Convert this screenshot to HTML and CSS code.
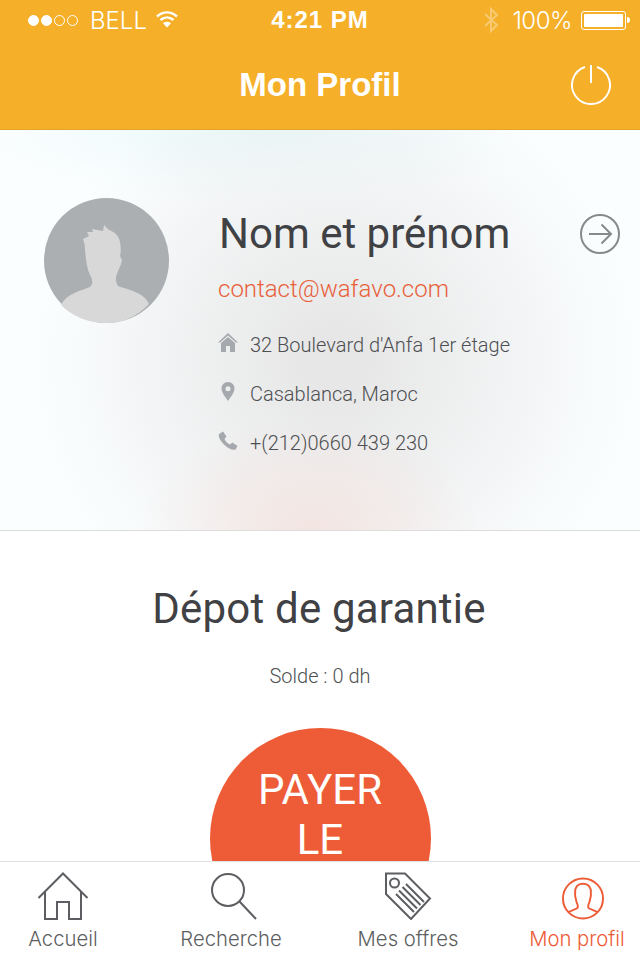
FILE: index.html
```html
<!DOCTYPE html>
<html>
    <head>
        <title>Mon Profil</title>
        <link rel="stylesheet" href="styles.css">
    </head>
    <body>
        <div id="app">
            <header class="top">
                <div class="status">
                    <div class="status-left">
                        <span class="dots"><i class="on"></i><i class="on"></i><i></i><i></i></span>
                        <span class="carrier">BELL</span>
                        <svg class="wifi" width="24" height="18" viewBox="0 0 24 18">
                            <path d="M2 6.5C8 1 16 1 22 6.5" />
                            <path d="M5.5 10C9.5 6.5 14.5 6.5 18.5 10" />
                            <path d="M12 17.5L8 13.2C10.4 11.4 13.6 11.4 16 13.2Z" class="solid" />
                        </svg>
                    </div>
                    <span class="clock">4:21 PM</span>
                    <div class="status-right">
                        <svg class="bluetooth" width="16" height="26" viewBox="0 0 16 26">
                            <path d="M2 7L14 18L8 24V2L14 8L2 19" />
                        </svg>
                        <span class="battery-text">100%</span>
                        <span class="battery"><b></b></span>
                        <span class="battery-tip"></span>
                    </div>
                </div>
                <div class="nav">
                    <h1>Mon Profil</h1>
                    <svg class="power" width="40" height="40" viewBox="0 0 40 40">
                        <path d="M14 2A19 19 0 1 0 26 2" />
                        <path d="M20 0V18" />
                    </svg>
                </div>
            </header>

            <main class="content">
                <section class="profile">
                    <svg class="avatar" width="125" height="125" viewBox="0 0 125 125">
                        <circle cx="62.5" cy="62.5" r="62.5" fill="#abafb2" />
                        <path fill="#d8d8d8" d="M17 107C22 96 36 93 46 89C49 86 49 82 46 77C43 71 42 62 41 52C41 47 40 44 39 41L45 38L43 34L49 34L48 31L59 33L60 27L65 32C71 34 75 38 76 44C77 50 77 54 76 58L78 62C77 68 75 70 73 76C71 80 72 85 74 88C84 92 100 94 105 106C94 118 79 125 62.5 125C44 125 28 118 17 107Z" />
                    </svg>
                    <div class="details">
                        <div class="name-row">
                            <h2>Nom et prénom</h2>
                            <svg class="go" width="42" height="42" viewBox="0 0 42 42">
                                <circle cx="21" cy="21" r="19" />
                                <path d="M10 21H31M22.5 11.5L32 21L22.5 30.5" />
                            </svg>
                        </div>
                        <a class="email">contact@wafavo.com</a>
                        <ul class="info">
                            <li>
                                <svg width="20" height="20" viewBox="0 0 20 20">
                                    <path d="M10 0L20 9.5H18L10 2.5L2 9.5H0Z M10 4L17 10V19H12V13H8V19H3V10Z" />
                                </svg>
                                32 Boulevard d'Anfa 1er étage
                            </li>
                            <li>
                                <svg width="20" height="20" viewBox="0 0 20 20">
                                    <path fill-rule="evenodd" d="M10 0C14 0 16.5 3 16.5 6.5C16.5 10.5 12 16 10 19C8 16 3.500 10.500 3.500 6.500C3.500 3 6 0 10 0ZM10 4.300A2.500 2.500 0 1 0 10 9.300A2.500 2.500 0 1 0 10 4.300Z" />
                                </svg>
                                Casablanca, Maroc
                            </li>
                            <li>
                                <svg width="20" height="20" viewBox="0 0 20 20">
                                    <path d="M1 3L5 0.500L8.500 5.500L6.500 8C7.500 10.500 9.500 12.500 12 13.500L14.500 11.500L19.500 15L17.500 18.500C15 19.500 10.500 18 6.500 14C2.500 10 0 6 1 3Z" />
                                </svg>
                                +(212)0660 439 230
                            </li>
                        </ul>
                    </div>
                </section>

                <section class="deposit">
                    <h2>Dépot de garantie</h2>
                    <p>Solde : 0 dh</p>
                    <button class="pay"><span>PAYER</span><span>LE</span></button>
                </section>
            </main>

            <nav class="tabs">
                <a class="tab">
                    <svg width="52" height="48" viewBox="0 0 52 48">
                        <path d="M1.500 26L26 1.500L50.500 26M8 20V47H20V30H32V47H44V20" />
                    </svg>
                    Accueil
                </a>
                <a class="tab">
                    <svg class="search-icon" width="50" height="47" viewBox="0 0 50 47">
                        <circle cx="19" cy="17" r="16" />
                        <path d="M30.500 28.500L47 46" />
                    </svg>
                    Recherche
                </a>
                <a class="tab">
                    <svg width="48" height="48" viewBox="0 0 48 48">
                        <path d="M2 1.500H21L46 26.500L27 47L2 22Z" />
                        <circle cx="10.500" cy="11" r="4.500" />
                        <path d="M12 22L30 40M15 18.500L33 36.500M18.500 15L36.500 33M22 12L40 30" />
                    </svg>
                    Mes offres
                </a>
                <a class="tab active">
                    <svg class="profile-icon" width="44" height="43" viewBox="0 0 44 44">
                        <circle cx="22" cy="22" r="20.500" />
                        <path d="M7 36L16 32C17 31 17 29 15.500 26C14 22 13.500 17 14 13C15 9 18 7 22 7C26 7 29 9 30 13C30.500 17 30 22 28.500 26C27 29 27 31 28 32L37 36" />
                    </svg>
                    Mon profil
                </a>
            </nav>
        </div>
    </body>
</html>
```

FILE: styles.css
```css
html, body {
    margin: 0;
    padding: 0;
}

body {
    width: 640px;
    height: 960px;
    overflow: hidden;
    background: #fff;
    font-family: Roboto, sans-serif;
    color: #3f4144;
}

h1, h2, p, ul {
    margin: 0;
    padding: 0;
}

#app {
    display: flex;
    flex-direction: column;
    height: 960px;
}

/* Orange header */

.top {
    flex: none;
    height: 129px;
    background: #f5af29;
    border-bottom: 1px solid #e5a228;
    color: #fff;
    font-family: "Liberation Sans", sans-serif;
}

.status {
    display: grid;
    grid-template-columns: 1fr auto 1fr;
    align-items: center;
    height: 40px;
    padding: 0 10px 0 10px;
    font-size: 25px;
}

.status-left, .status-right {
    display: flex;
    align-items: center;
}

.status-left {
    padding-left: 18px;
}

.status-right {
    justify-content: flex-end;
}

.dots {
    display: flex;
    gap: 2px;
    margin-right: 12px;
}

.dots i {
    box-sizing: border-box;
    width: 11px;
    height: 11px;
    border: 1px solid #fff;
    border-radius: 50%;
}

.dots i.on {
    background: #fff;
}

.carrier {
    font-family: Inter, sans-serif;
    font-weight: 300;
    font-size: 24px;
}

.wifi {
    margin-left: 8px;
    margin-bottom: 2px;
    fill: none;
    stroke: #fff;
    stroke-width: 2.4;
}

.wifi .solid {
    fill: #fff;
    stroke: none;
}

.clock {
    font-size: 24px;
    font-weight: bold;
    letter-spacing: 1px;
}

.bluetooth {
    margin-right: 13px;
    fill: none;
    stroke: rgba(255, 255, 255, .35);
    stroke-width: 2;
}

.battery-text {
    font-family: Inter, sans-serif;
    font-weight: 300;
    font-size: 24px;
    margin-right: 9px;
    letter-spacing: -.5px;
}

.battery {
    box-sizing: border-box;
    display: block;
    width: 45px;
    height: 19px;
    padding: 2px;
    border: 1px solid #fff;
    border-radius: 3px;
}

.battery b {
    display: block;
    height: 100%;
    background: #fff;
    border-radius: 1px;
}

.battery-tip {
    width: 3px;
    height: 6px;
    background: #fff;
    border-radius: 0 3px 3px 0;
    margin-left: 1px;
}

.nav {
    position: relative;
    display: flex;
    justify-content: center;
    align-items: center;
    height: 89px;
}

.nav h1 {
    font-size: 33px;
    font-weight: bold;
}

.power {
    position: absolute;
    top: 25px;
    right: 29px;
    fill: none;
    stroke: #fff;
    stroke-width: 2;
}

/* Scrolling part, the tab bar cuts it off */

.content {
    flex: 1;
    min-height: 0;
    overflow: hidden;
}

.profile {
    box-sizing: border-box;
    display: flex;
    height: 401px;
    padding: 68px 19px 0 44px;
    border-bottom: 1px solid #dcdcdc;
    background:
        radial-gradient(ellipse 170px 110px at 310px 400px, rgba(243, 226, 222, .85), rgba(243, 226, 222, 0)),
        radial-gradient(ellipse 300px 290px at 335px 230px, #e7e7e7 10%, rgba(231, 231, 231, 0)),
        radial-gradient(ellipse 280px 70px at 260px 0, #eaf8f9, rgba(234, 248, 249, 0)),
        #fbfeff;
}

.avatar {
    flex: none;
}

.details {
    flex: 1;
    margin-left: 49px;
}

.name-row {
    display: flex;
    justify-content: space-between;
    align-items: center;
    height: 70px;
}

.name-row h2 {
    font-size: 42px;
    font-weight: 400;
    margin-left: 1px;
}

.go {
    margin-top: 2px;
    fill: none;
    stroke: #87898b;
    stroke-width: 2;
}

.email {
    display: block;
    margin-top: 6px;
    font-size: 24px;
    font-weight: 300;
    line-height: 30px;
    color: #e8603a;
}

.info {
    list-style: none;
    margin-top: 16px;
}

.info li {
    display: flex;
    align-items: center;
    gap: 12px;
    height: 49px;
    font-size: 20px;
    font-weight: 300;
    color: #4d4f52;
}

.info svg {
    flex: none;
    width: 20px;
    height: 20px;
    margin-top: -4px;
    fill: #a5a9ad;
}

.deposit {
    display: flex;
    flex-direction: column;
    align-items: center;
    padding-top: 51px;
}

.deposit h2 {
    font-size: 42px;
    font-weight: 400;
    line-height: 54px;
    letter-spacing: .2px;
    margin-right: 2px;
}

.deposit p {
    margin-top: 28px;
    font-size: 20px;
    font-weight: 300;
    line-height: 24px;
    color: #4d4f52;
}

.pay {
    box-sizing: border-box;
    display: flex;
    flex-direction: column;
    align-items: center;
    gap: 10px;
    flex: none;
    width: 221px;
    height: 221px;
    margin-top: 40px;
    padding: 42px 30px 0;
    border: 0;
    border-radius: 50%;
    background: #ed5c36;
    color: #fff;
    font-family: Roboto, sans-serif;
    font-size: 42px;
    line-height: 40px;
}

/* Tab bar */

.tabs {
    flex: none;
    display: grid;
    grid-template-columns: 168px 177px 169px 126px;
    height: 98px;
    border-top: 1px solid #e2e2e2;
    background: #fff;
}

.tab {
    display: flex;
    flex-direction: column;
    align-items: center;
    justify-content: flex-end;
    width: 126px;
    height: 89px;
    font-family: Inter, sans-serif;
    font-weight: 300;
    font-size: 20.3px;
    line-height: 24px;
    color: #5c5e61;
}

.tab svg {
    flex: none;
    fill: none;
    stroke: #5c5e61;
    stroke-width: 2;
    margin-bottom: 7px;
}

.tab .search-icon {
    margin-left: 6px;
}

.tab .profile-icon {
    margin-left: 12px;
}

.tab.active {
    color: #ed5c36;
}

.tab.active svg {
    stroke: #ed5c36;
}
```
